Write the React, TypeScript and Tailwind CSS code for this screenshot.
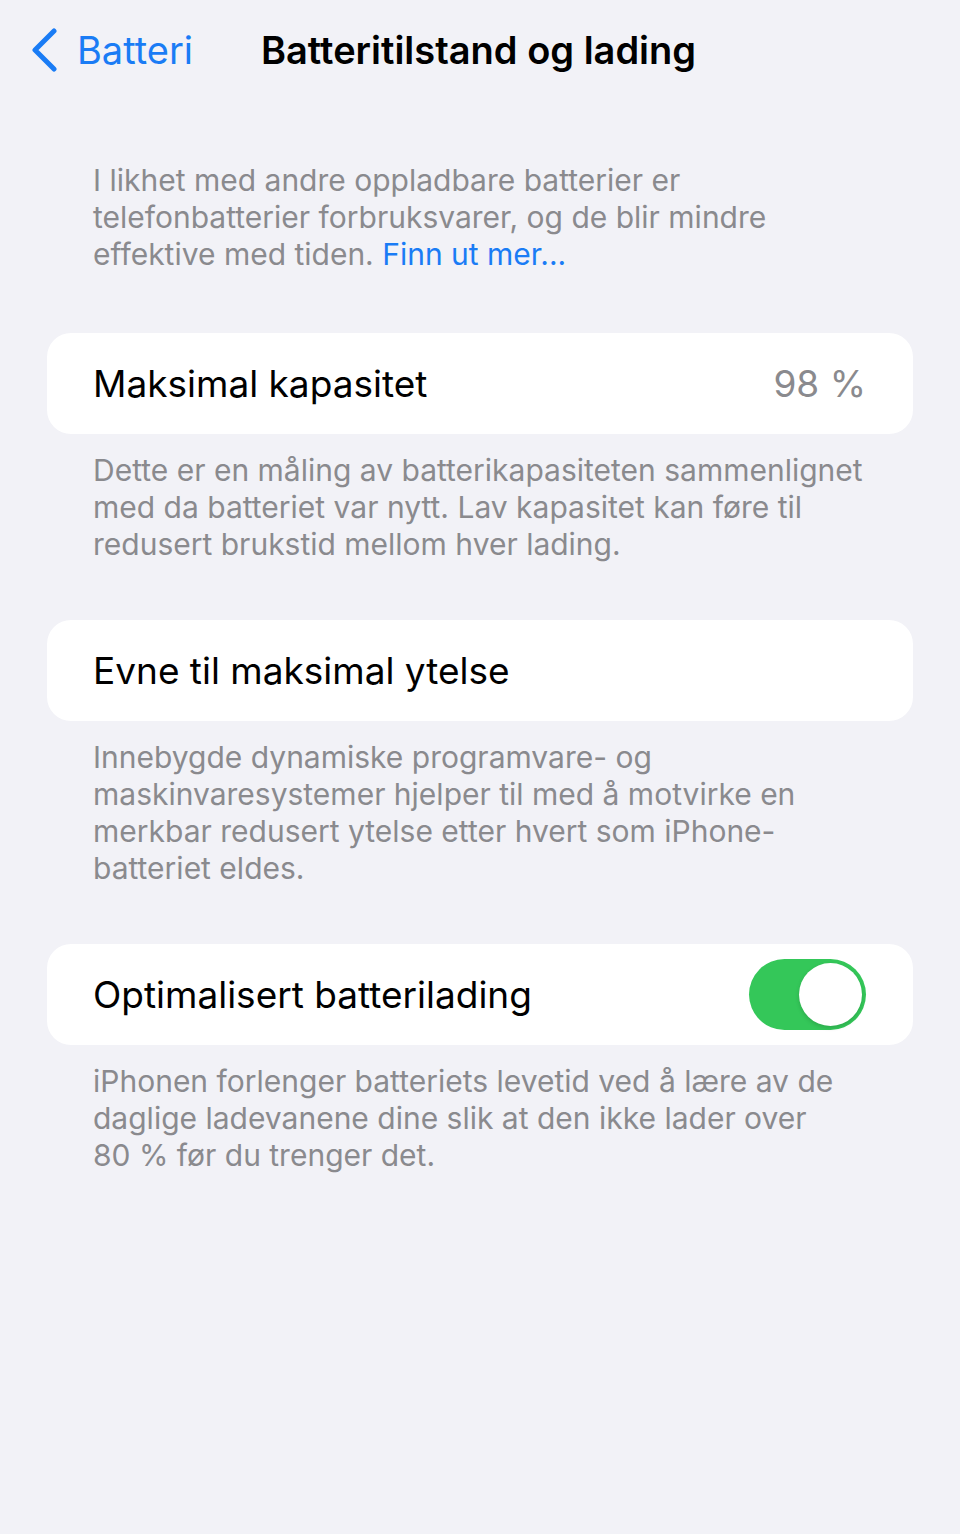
import React from "react";

const font = { fontFamily: "Inter, 'Noto Sans', sans-serif" };

function Row({ label, children }: { label: string; children?: React.ReactNode }) {
  return (
    <div className="mx-[47px] h-[101px] bg-white rounded-[24px] flex items-center justify-between pl-[46px] pr-[47px]">
      <span className="text-[37px] text-black">{label}</span>
      {children}
    </div>
  );
}

function Footer({ children }: { children: React.ReactNode }) {
  return (
    <p className="ml-[93px] mr-[90px] mt-[18px] text-[30px] leading-[37px] text-[#8a8a8e]">
      {children}
    </p>
  );
}

export default function App() {
  return (
    <div className="min-h-[1534px] w-[960px] bg-[#f2f2f7]" style={font}>
      {/* Nav bar */}
      <div className="h-[100px] flex items-center">
        <div className="flex items-center pl-[30px] w-[261px] text-[#1a7cf5]">
          <svg width="28" height="44" viewBox="0 0 28 44" fill="none">
            <polyline
              points="24,3 5,22 24,41"
              stroke="currentColor"
              strokeWidth="5"
              strokeLinecap="round"
              strokeLinejoin="round"
            />
          </svg>
          <span className="text-[38px] ml-[19px]">Batteri</span>
        </div>
        <h1 className="text-[38px] font-semibold text-black">Batteritilstand og lading</h1>
      </div>

      {/* Intro */}
      <div className="ml-[93px] mr-[90px] mt-[62px] text-[30px] leading-[37px] text-[#8a8a8e]">
        I likhet med andre oppladbare batterier er telefonbatterier forbruksvarer, og de blir mindre
        effektive med tiden. <a className="text-[#1a7cf5]">Finn ut mer...</a>
      </div>

      <div className="mt-[60px]">
        <Row label="Maksimal kapasitet">
          <span className="text-[37px] text-[#8a8a8e]">98&nbsp;%</span>
        </Row>
        <Footer>
          Dette er en måling av batterikapasiteten sammenlignet med da batteriet var nytt. Lav
          kapasitet kan føre til redusert brukstid mellom hver lading.
        </Footer>
      </div>

      <div className="mt-[57px]">
        <Row label="Evne til maksimal ytelse" />
        <Footer>
          Innebygde dynamiske programvare- og maskinvaresystemer hjelper til med å motvirke en
          merkbar redusert ytelse etter hvert som iPhone-batteriet eldes.
        </Footer>
      </div>

      <div className="mt-[57px]">
        <Row label="Optimalisert batterilading">
          <div className="w-[117px] h-[71px] rounded-full bg-[#34c759] p-[4px] flex justify-end">
            <div className="w-[63px] h-[63px] rounded-full bg-white shadow-[0_2px_4px_rgba(0,0,0,0.15)]" />
          </div>
        </Row>
        <Footer>
          iPhonen forlenger batteriets levetid ved å lære av de daglige ladevanene dine slik at den
          ikke lader over 80&nbsp;% før du trenger det.
        </Footer>
      </div>
    </div>
  );
}
